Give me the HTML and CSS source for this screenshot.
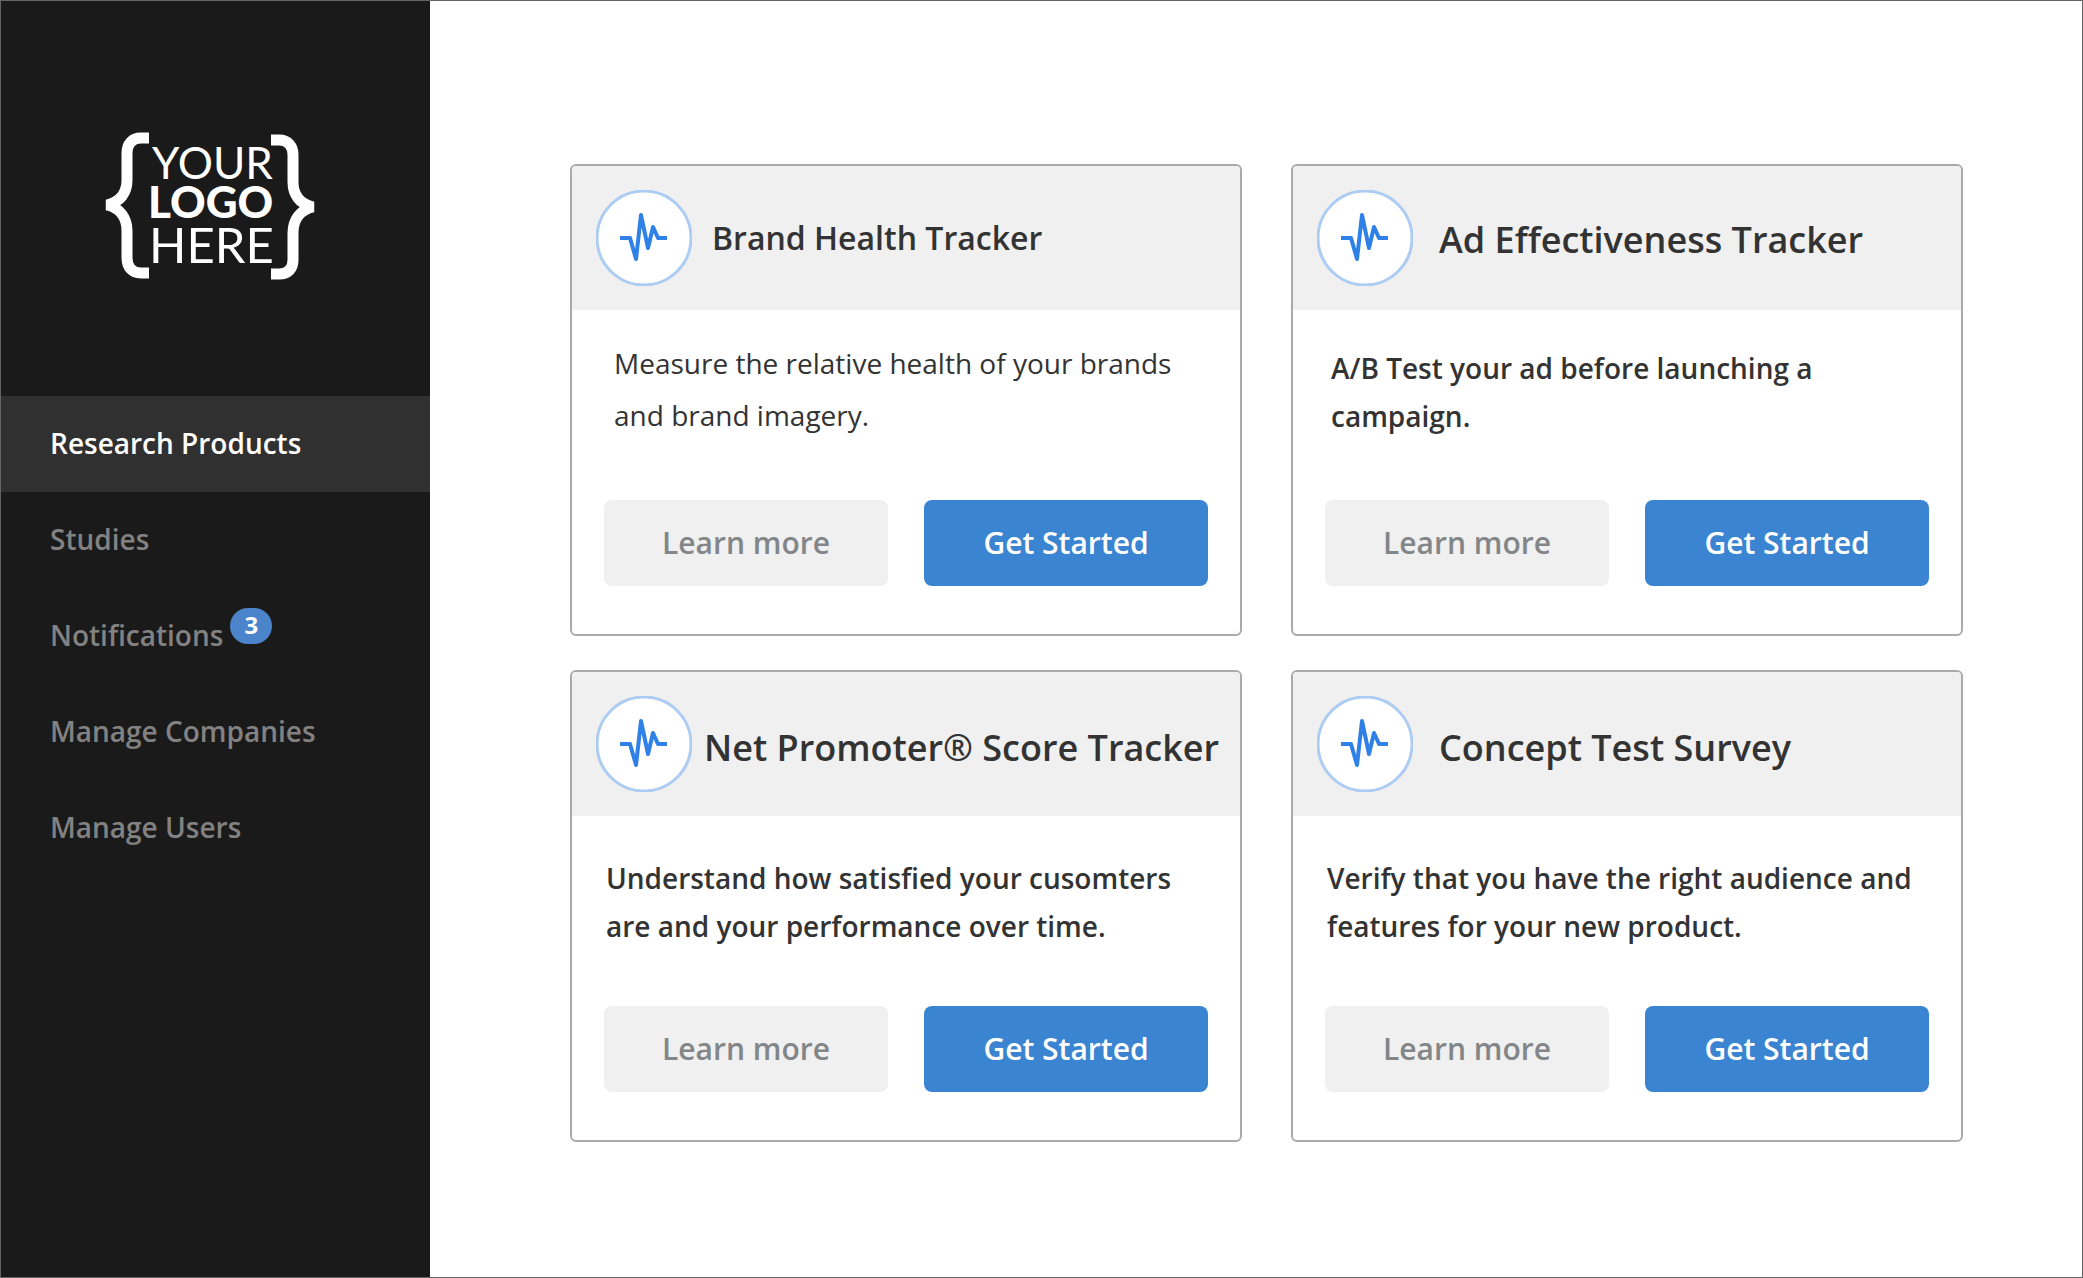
FILE: index.html
```html
<!DOCTYPE html>
<html lang="en">
<head>
<meta charset="utf-8">
<meta name="viewport" content="width=device-width, initial-scale=1">
<title>Research Products</title>
<link rel="stylesheet" href="styles.css">
</head>
<body>
<svg class="defs" aria-hidden="true">
  <symbol id="pulse" viewBox="0 0 96 96">
    <circle class="pulse-ring" cx="48" cy="48" r="47"/>
    <path class="pulse-line" d="M24 48H34L40 69L45 25L52 58L57 37L62 48H71"/>
  </symbol>
</svg>
<aside class="sidebar">
  <a class="logo" href="#" aria-label="Your logo here">
    <svg class="logo-mark" viewBox="0 0 208 147" role="img" aria-hidden="true">
      <g class="logo-brace">
        <path d="M43 5H35C26 5 21 11 21 20V47C21 60 14 69 1 72C14 75 21 85 21 98V125C21 134 26 140 35 140H43"/>
        <path d="M165 7H173C182 7 187 13 187 22V49C187 62 194 71 207 74C194 77 187 87 187 100V127C187 136 182 141 173 141H165"/>
      </g>
      <text class="logo-light" x="46" y="46">YOUR</text>
      <text class="logo-bold" x="42" y="85">LOGO</text>
      <text class="logo-wide" x="43" y="130">HERE</text>
    </svg>
  </a>
  <nav class="nav">
    <a class="nav-item nav-item-active" href="#" aria-current="page">Research Products</a>
    <a class="nav-item" href="#">Studies</a>
    <a class="nav-item" href="#">Notifications<span class="badge">3</span></a>
    <a class="nav-item" href="#">Manage Companies</a>
    <a class="nav-item" href="#">Manage Users</a>
  </nav>
</aside>
<main class="products">
  <article class="card card-featured">
    <header class="card-head">
      <svg class="card-icon" aria-hidden="true"><use href="#pulse"/></svg>
      <h2 class="card-title">Brand Health Tracker</h2>
    </header>
    <p class="card-text">Measure the relative health of your brands and brand imagery.</p>
    <div class="card-actions">
      <button class="btn" type="button">Learn more</button>
      <button class="btn btn-primary" type="button">Get Started</button>
    </div>
  </article>
  <article class="card">
    <header class="card-head">
      <svg class="card-icon" aria-hidden="true"><use href="#pulse"/></svg>
      <h2 class="card-title">Ad Effectiveness Tracker</h2>
    </header>
    <p class="card-text">A/B Test your ad before launching a campaign.</p>
    <div class="card-actions">
      <button class="btn" type="button">Learn more</button>
      <button class="btn btn-primary" type="button">Get Started</button>
    </div>
  </article>
  <article class="card card-low card-long">
    <header class="card-head">
      <svg class="card-icon" aria-hidden="true"><use href="#pulse"/></svg>
      <h2 class="card-title">Net Promoter® Score Tracker</h2>
    </header>
    <p class="card-text">Understand how satisfied your cusomters are and your performance over time.</p>
    <div class="card-actions">
      <button class="btn" type="button">Learn more</button>
      <button class="btn btn-primary" type="button">Get Started</button>
    </div>
  </article>
  <article class="card card-low">
    <header class="card-head">
      <svg class="card-icon" aria-hidden="true"><use href="#pulse"/></svg>
      <h2 class="card-title">Concept Test Survey</h2>
    </header>
    <p class="card-text">Verify that you have the right audience and features for your new product.</p>
    <div class="card-actions">
      <button class="btn" type="button">Learn more</button>
      <button class="btn btn-primary" type="button">Get Started</button>
    </div>
  </article>
</main>
</body>
</html>
```
FILE: styles.css
```css
* {
  box-sizing: border-box;
}

body {
  display: flex;
  min-height: 100vh;
  margin: 0;
  border: 1px solid #646464;
  background: #fff;
  color: #333;
  font-family: "Open Sans", sans-serif;
}

.defs {
  position: absolute;
  width: 0;
  height: 0;
}

.sidebar {
  flex: none;
  width: 429px;
  background: #1a1a1a;
}

.logo {
  display: block;
  padding: 132px 105px 116px;
}

.logo-mark {
  display: block;
  width: 208px;
  height: 147px;
  overflow: visible;
  fill: #fff;
  font-family: Lato, sans-serif;
}

.logo-brace {
  fill: none;
  stroke: #fff;
  stroke-width: 11px;
}

.logo-light {
  font-size: 44px;
  font-weight: 400;
}

.logo-bold {
  font-size: 44px;
  font-weight: 900;
}

.logo-wide {
  font-size: 49px;
  font-weight: 400;
}

.nav-item {
  display: flex;
  align-items: center;
  height: 96px;
  padding: 0 49px 2px;
  color: #828282;
  font-size: 28px;
  font-weight: 600;
  text-decoration: none;
}

.nav-item-active {
  background: #303030;
  color: #fff;
}

.badge {
  height: 36px;
  margin: 0 0 18px 7px;
  padding: 0 14px;
  border-radius: 18px;
  background: #4c84cc;
  color: #fff;
  font-size: 24px;
  font-weight: 700;
  line-height: 34px;
}

.products {
  flex: 1;
  display: grid;
  grid-template-columns: 1fr 1fr;
  align-content: start;
  gap: 34px 49px;
  padding: 163px 119px 135px 140px;
}

.card {
  display: flex;
  flex-direction: column;
  min-height: 472px;
  border: 2px solid #aaa;
  border-radius: 6px;
  overflow: hidden;
}

.card-head {
  display: flex;
  align-items: center;
  gap: 26px;
  height: 144px;
  padding: 0 16px 0 24px;
  background: #f0f0f0;
}

.card-icon {
  flex: none;
  width: 96px;
  height: 96px;
}

.pulse-ring {
  fill: #fff;
  stroke: #acccf3;
  stroke-width: 3px;
}

.pulse-line {
  fill: none;
  stroke: #2f80e7;
  stroke-width: 4px;
  stroke-linejoin: round;
}

.card-title {
  margin: 0;
  padding-top: 4px;
  font-size: 36px;
  font-weight: 600;
  line-height: 48px;
  white-space: nowrap;
}

.card-text {
  margin: 0;
  padding: 34px 32px 0 38px;
  font-size: 28px;
  font-weight: 600;
  line-height: 48px;
}

.card-actions {
  display: flex;
  gap: 36px;
  margin-top: auto;
  padding: 0 32px 48px;
}

.btn {
  flex: 1;
  height: 86px;
  padding: 0 0 2px;
  border: 0;
  border-radius: 8px;
  background: #f0f0f0;
  color: #828689;
  font: 600 30px "Open Sans", sans-serif;
}

.btn-primary {
  background: #3b84d1;
  color: #fff;
}

.card-featured .card-head {
  gap: 20px;
}

.card-featured .card-title {
  padding-top: 0;
  font-size: 32px;
}

.card-featured .card-text {
  padding: 27px 32px 0 42px;
  font-weight: 400;
  line-height: 52px;
}

.card-low .card-title {
  padding-top: 8px;
}

.card-low .card-text {
  padding-top: 38px;
  padding-left: 34px;
}

.card-long .card-head {
  gap: 12px;
}
```
